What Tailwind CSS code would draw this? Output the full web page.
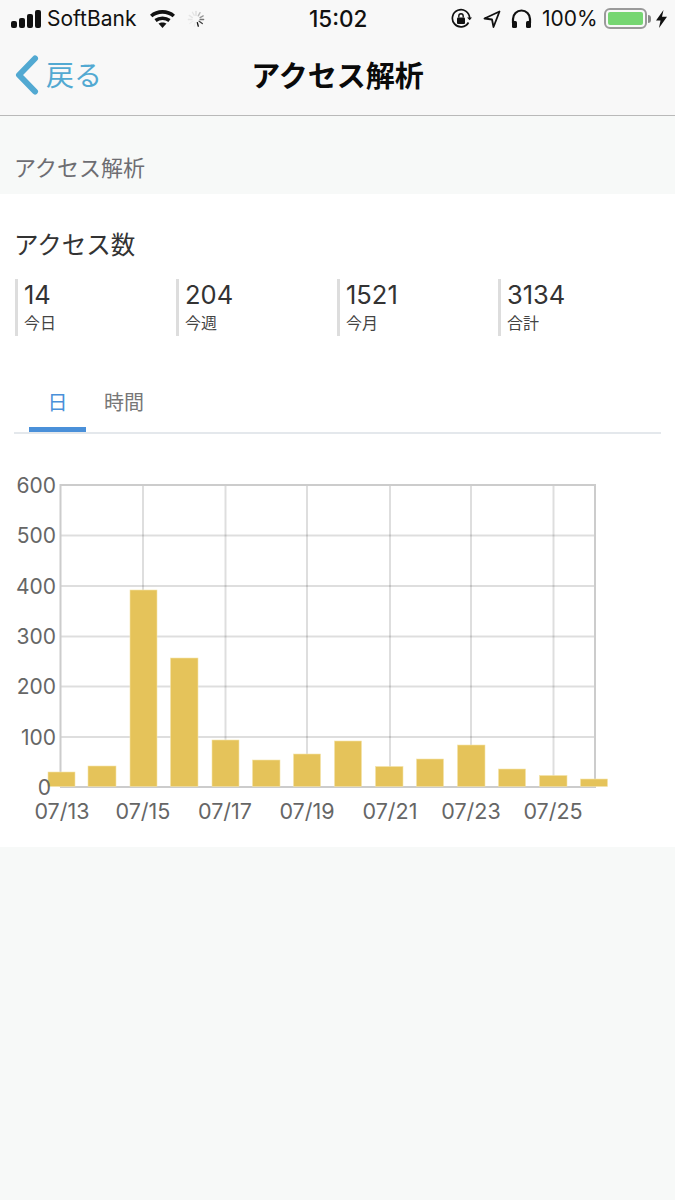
<!DOCTYPE html>
<html lang="ja">
<head>
    <meta charset="UTF-8">
    <meta name="viewport" content="width=device-width, initial-scale=1.0">
    <title>アクセス解析</title>
    <script src="https://cdn.jsdelivr.net/npm/@tailwindcss/browser@4"></script>
</head>
<body class="bg-[#f7f9f8] font-['Inter','Noto_Sans_CJK_JP',sans-serif] w-[675px] h-[1200px] overflow-hidden">

    <!-- Status bar + nav -->
    <header class="bg-[#f8f8f8] h-[116px] border-b border-[#b9b9b9]">
        <div class="relative h-[37px] flex items-center justify-between pl-[11px] pr-[8px] text-[#111]">
            <div class="flex items-center">
                <svg width="30" height="20" viewBox="0 0 30 20" fill="#111">
                    <rect x="0" y="12" width="6" height="7" rx="2"/>
                    <rect x="8" y="9" width="6" height="10" rx="2"/>
                    <rect x="16" y="5" width="6" height="14" rx="2"/>
                    <rect x="24" y="1" width="6" height="18" rx="2"/>
                </svg>
                <span class="ml-[6px] w-[91px] text-[21px] leading-none whitespace-nowrap">SoftBank</span>
                <svg class="ml-[12px]" width="25" height="20" viewBox="0 0 25 20" fill="none" stroke="#111" stroke-width="3.600">
                    <path d="M1.200 7 C7.500 1.500 17.500 1.500 23.800 7"/>
                    <path d="M5.500 11.500 C9.500 8.500 15.500 8.500 19.500 11.500"/>
                    <path d="M12.500 19 L8.500 14.600 C10.500 13 14.500 13 16.500 14.600 Z" fill="#111" stroke="none"/>
                </svg>
                <svg class="ml-[12px]" width="18" height="18" viewBox="0 0 20 20" stroke-width="1.500" stroke-linecap="round">
                    <path d="M10 1.500V6" stroke="#ddd"/><path d="M14.500 3 12.500 6.500" stroke="#bbb"/><path d="M18 6.500 14.500 8.500" stroke="#999"/>
                    <path d="M18.500 10.500H14.500" stroke="#777"/><path d="M17 15 13.500 12.500" stroke="#444"/><path d="M12.500 18 11.500 14" stroke="#111"/>
                    <path d="M8 18 9 14" stroke="#eee"/><path d="M3 15 6.500 12.500" stroke="#eee"/><path d="M1.500 10.500H5.500" stroke="#e5e5e5"/>
                    <path d="M2.500 6 6 8.500" stroke="#e5e5e5"/><path d="M6 2.500 8 6" stroke="#e5e5e5"/>
                </svg>
            </div>
            <span class="absolute left-[309px] top-[8px] text-[22.5px] leading-[22px] font-medium">15:02</span>
            <div class="flex items-center">
                <svg width="22" height="22" viewBox="0 0 22 22" fill="none" stroke="#111" stroke-width="1.7">
                    <path d="M18.5 14.5A8.6 8.6 0 1 1 19.6 10"/>
                    <path d="M17 9.5 19.7 12.3 22 9.5Z" fill="#111" stroke="none"/>
                    <rect x="7" y="9.5" width="8" height="6.5" rx="1" fill="#111" stroke="none"/>
                    <path d="M8.8 9.5V8a2.2 2.2 0 0 1 4.4 0V9.500" stroke-width="1.400"/>
                </svg>
                <svg class="ml-[11px]" width="18" height="20" viewBox="0 0 18 20" fill="none" stroke="#111" stroke-width="1.8" stroke-linejoin="round">
                    <path d="M16.500 2.500 1.500 9.500 9 10.500 10.500 18Z"/>
                </svg>
                <svg class="ml-[10px]" width="21" height="20" viewBox="0 0 21 20" fill="none" stroke="#111" stroke-width="2.200">
                    <path d="M2 14V10a8.500 8.500 0 0 1 17 0v4"/>
                    <rect x="1" y="12" width="5" height="7" rx="1.500" fill="#111" stroke="none"/>
                    <rect x="15" y="12" width="5" height="7" rx="1.500" fill="#111" stroke="none"/>
                </svg>
                <span class="ml-[10px] w-[55px] text-[21px] leading-none whitespace-nowrap">100%</span>
                <div class="ml-[7px] w-[43px] h-[21px] border-2 border-[#9a9a9a] rounded-[6px] p-[2px]">
                    <div class="h-full bg-[#76d672] rounded-[2px]"></div>
                </div>
                <div class="ml-[1px] w-[3px] h-[8px] bg-[#8a8a8a] rounded-r-full"></div>
                <svg class="ml-[5px]" width="11" height="18" viewBox="0 0 11 18" fill="#111">
                    <path d="M7.500 0 0 10.500H4.500L3 18 11 6.800H6Z"/>
                </svg>
            </div>
        </div>
        <div class="relative h-[78px] flex items-center justify-center">
            <div class="absolute left-[14px] top-[18px] flex items-center text-[#52a9d2]">
                <svg width="26" height="40" viewBox="0 0 26 40" fill="none" stroke="#52a9d2" stroke-width="6" stroke-linecap="round" stroke-linejoin="round">
                    <path d="M21 3.500 5 20 21 36.500"/>
                </svg>
                <span class="ml-[6px] pt-[2px] text-[28px] leading-none">戻る</span>
            </div>
            <h1 class="text-[29px] leading-none font-bold text-[#0a0a0a]">アクセス解析</h1>
        </div>
    </header>

    <!-- Section label -->
    <div class="h-[78px] pl-[14px] pt-[39px] text-[22px] leading-[26px] text-[#6d6d72]">アクセス解析</div>

    <!-- Card -->
    <section class="bg-white h-[653px] pt-[36px]">
        <h2 class="pl-[14px] text-[24.500px] leading-[30px] text-[#333]">アクセス数</h2>

        <div class="mt-[19px] pl-[15px] flex">
            <div class="w-[161px] h-[57px] border-l-[3px] border-[#ddd] pl-[6px]">
                <p class="text-[25.500px] leading-[30px] text-[#333] mt-[1px]">14</p>
                <p class="text-[16px] leading-[20px] text-[#444] mt-[3px]">今日</p>
            </div>
            <div class="w-[161px] h-[57px] border-l-[3px] border-[#ddd] pl-[6px]">
                <p class="text-[25.500px] leading-[30px] text-[#333] mt-[1px]">204</p>
                <p class="text-[16px] leading-[20px] text-[#444] mt-[3px]">今週</p>
            </div>
            <div class="w-[161px] h-[57px] border-l-[3px] border-[#ddd] pl-[6px]">
                <p class="text-[25.500px] leading-[30px] text-[#333] mt-[1px]">1521</p>
                <p class="text-[16px] leading-[20px] text-[#444] mt-[3px]">今月</p>
            </div>
            <div class="w-[161px] h-[57px] border-l-[3px] border-[#ddd] pl-[6px]">
                <p class="text-[25.500px] leading-[30px] text-[#333] mt-[1px]">3134</p>
                <p class="text-[16px] leading-[20px] text-[#444] mt-[3px]">合計</p>
            </div>
        </div>

        <!-- Tabs -->
        <div class="mt-[39px] mx-[14px] h-[59px] flex pl-[15px] border-b-2 border-[#e4e8ec]">
            <div class="w-[57px] h-[57px] border-b-[5px] border-[#4a90d9] text-center text-[20px] leading-[56px] text-[#4a90d9]">日</div>
            <div class="ml-[18px] text-[20px] leading-[56px] text-[#777]">時間</div>
        </div>

        <!-- Chart -->
        <svg class="block mt-[36px]" width="675" height="372" viewBox="0 470 675 372" font-family="Inter, 'Noto Sans CJK JP', sans-serif">
            <g stroke="#000" stroke-opacity="0.13" stroke-width="2">
                <path d="M60 535.500H595M60 586H595M60 636.500H595M60 686.500H595M60 737H595"/>
                <path d="M143 485V787M225.500 485V787M307 485V787M390 485V787M471 485V787M553.500 485V787"/>
            </g>
            <path d="M60.500 787V485H595V787" fill="none" stroke="#ccc" stroke-width="2"/>
            <path d="M60 787H596" stroke="#ccc" stroke-width="2"/>
            <g fill="#e5c35a" stroke="#f3e3a8" stroke-width="0.600">
                <rect x="48" y="772" width="27" height="14.500"/>
                <rect x="88" y="766" width="28" height="20.500"/>
                <rect x="130" y="590" width="27" height="196.500"/>
                <rect x="170.500" y="658" width="27.500" height="128.500"/>
                <rect x="212" y="740" width="27" height="46.500"/>
                <rect x="252.500" y="760" width="27.500" height="26.500"/>
                <rect x="293.500" y="754" width="27" height="32.500"/>
                <rect x="334.500" y="741" width="27" height="45.500"/>
                <rect x="375.500" y="766.500" width="27.500" height="20"/>
                <rect x="416.500" y="759" width="27" height="27.500"/>
                <rect x="457.500" y="745" width="27.500" height="41.500"/>
                <rect x="498.500" y="769" width="27" height="17.500"/>
                <rect x="539.500" y="775.500" width="27.500" height="11"/>
                <rect x="580.500" y="779" width="27" height="7.500"/>
            </g>
            <g fill="#666" font-size="21" text-anchor="end">
                <text x="56" y="493">600</text>
                <text x="56" y="543">500</text>
                <text x="56" y="594">400</text>
                <text x="56" y="644">300</text>
                <text x="56" y="694">200</text>
                <text x="56" y="745">100</text>
                <text x="51" y="795">0</text>
            </g>
            <g fill="#666" font-size="21.500" text-anchor="middle">
                <text x="62" y="819">07/13</text>
                <text x="143" y="819">07/15</text>
                <text x="225" y="819">07/17</text>
                <text x="307" y="819">07/19</text>
                <text x="390" y="819">07/21</text>
                <text x="471" y="819">07/23</text>
                <text x="553" y="819">07/25</text>
            </g>
        </svg>
    </section>
</body>
</html>
